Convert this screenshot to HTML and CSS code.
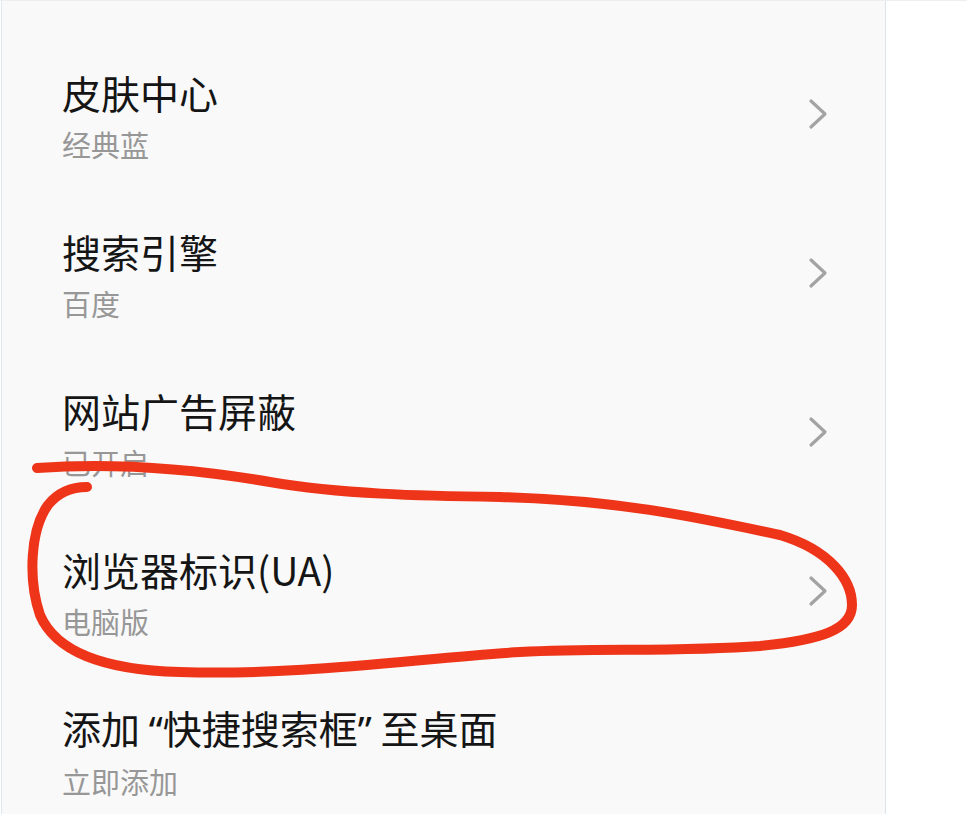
FILE: index.html
```html
<!DOCTYPE html>
<html lang="zh-CN">
<head>
<meta charset="utf-8">
<title>设置</title>
<link rel="stylesheet" href="styles.css">
</head>
<body>
<div class="screen">
  <div class="panel">
    <ul class="list">
      <li class="row">
        <div class="text"><div class="title">主页设置</div><div class="sub">默认</div></div>
        <svg class="chev" viewBox="0 0 20 32"><path d="M3 3 L17 16 L3 29"/></svg>
      </li>
      <li class="row">
        <div class="text"><div class="title">皮肤中心</div><div class="sub">经典蓝</div></div>
        <svg class="chev" viewBox="0 0 20 32"><path d="M3 3 L17 16 L3 29"/></svg>
      </li>
      <li class="row">
        <div class="text"><div class="title">搜索引擎</div><div class="sub">百度</div></div>
        <svg class="chev" viewBox="0 0 20 32"><path d="M3 3 L17 16 L3 29"/></svg>
      </li>
      <li class="row">
        <div class="text"><div class="title">网站广告屏蔽</div><div class="sub">已开启</div></div>
        <svg class="chev" viewBox="0 0 20 32"><path d="M3 3 L17 16 L3 29"/></svg>
      </li>
      <li class="row">
        <div class="text"><div class="title">浏览器标识(UA)</div><div class="sub">电脑版</div></div>
        <svg class="chev" viewBox="0 0 20 32"><path d="M3 3 L17 16 L3 29"/></svg>
      </li>
      <li class="row">
        <div class="text"><div class="title">添加 <span class="q">“</span>快捷搜索框<span class="q">”</span> 至桌面</div><div class="sub">立即添加</div></div>
      </li>
    </ul>
  </div>
  <svg class="mark" viewBox="0 0 967 814" width="967" height="814">
    <path d="M37 468 C120 462 200 470 270 482 C340 494 420 496 500 497 C620 500 700 518 780 535 C830 550 852 580 852 605 C852 630 820 640 760 646 C680 652 600 648 520 652 C420 658 300 676 180 672 C100 670 55 650 40 615 C28 580 30 530 48 505 C60 490 75 487 87 487"/>
  </svg>
</div>
</body>
</html>
```

FILE: styles.css
```css
html, body {
  margin: 0;
  padding: 0;
  background: #ffffff;
}

.screen {
  position: relative;
  width: 967px;
  height: 814px;
  overflow: hidden;
  border-top: 1px solid #eceef1;
  box-sizing: border-box;
  font-family: "Noto Sans CJK SC", "Noto Sans", sans-serif;
}

.panel {
  margin-left: 1px;
  width: 885px;
  height: 100%;
  background: #f9f9f9;
  border-left: 1px solid #e1e7ef;
  border-right: 1px solid #dbe3ed;
  box-sizing: border-box;
  overflow: hidden;
}

.list {
  list-style: none;
  margin: -124px 0 0 0;
  padding: 0;
}

.row {
  height: 159px;
  display: flex;
  align-items: center;
  justify-content: space-between;
  padding: 0 57px 0 60px;
  box-sizing: border-box;
}

.text {
  display: flex;
  flex-direction: column;
}

.title {
  font-size: 39px;
  line-height: 46px;
  color: #151515;
}

.q {
  font-family: "Noto Sans", sans-serif;
}

.sub {
  margin-top: 10px;
  font-size: 29px;
  line-height: 38px;
  color: #979797;
}

.chev {
  width: 20px;
  height: 32px;
  margin-bottom: 4px;
  fill: none;
  stroke: #a3a3a3;
  stroke-width: 3.2;
  stroke-linecap: round;
  stroke-linejoin: round;
}

.mark {
  position: absolute;
  left: 0;
  top: -1px;
  pointer-events: none;
}

.mark path {
  fill: none;
  stroke: #ee3519;
  stroke-width: 10;
  stroke-linecap: round;
  stroke-linejoin: round;
}
```
